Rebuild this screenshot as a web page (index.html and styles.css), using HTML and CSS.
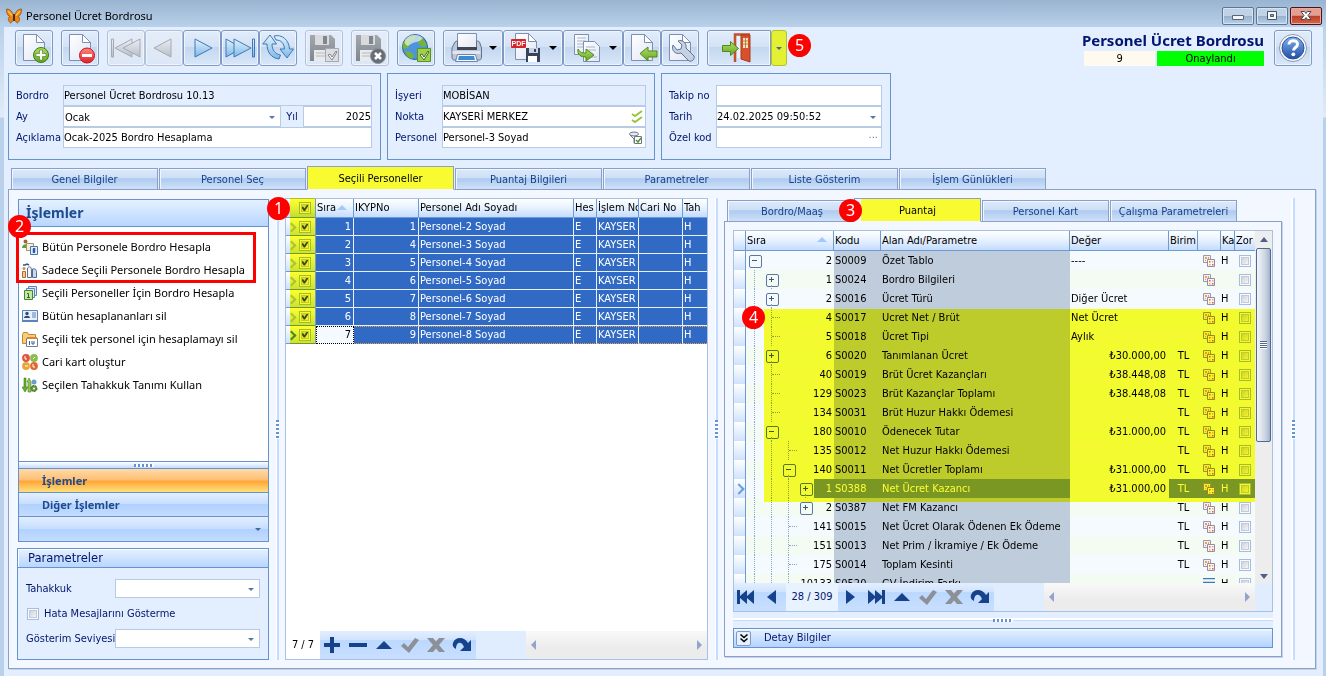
FILE: index.html
```html
<!DOCTYPE html>
<html lang="tr">
<head>
<meta charset="utf-8">
<title>Personel Ücret Bordrosu</title>
<link rel="stylesheet" href="styles.css">
</head>
<body>
<svg class="defs" aria-hidden="true">
  <defs>
    <linearGradient id="gBlue" x1="0" y1="0" x2="0" y2="1"><stop offset="0" stop-color="#e4f3fd"/><stop offset="1" stop-color="#7db8e8"/></linearGradient>
    <linearGradient id="gGray" x1="0" y1="0" x2="0" y2="1"><stop offset="0" stop-color="#eceff3"/><stop offset="1" stop-color="#b9bec6"/></linearGradient>
    <linearGradient id="gPage" x1="0" y1="0" x2="1" y2="1"><stop offset="0" stop-color="#fff"/><stop offset="1" stop-color="#dfe6f4"/></linearGradient>
    <linearGradient id="gGreen" x1="0" y1="0" x2="0" y2="1"><stop offset="0" stop-color="#b4dc62"/><stop offset="1" stop-color="#63a522"/></linearGradient>
    <linearGradient id="gRed" x1="0" y1="0" x2="0" y2="1"><stop offset="0" stop-color="#ff8a80"/><stop offset="1" stop-color="#e01c24"/></linearGradient>
    <linearGradient id="gHelp" x1="0" y1="0" x2="0" y2="1"><stop offset="0" stop-color="#7fb0ea"/><stop offset="1" stop-color="#1f4fa6"/></linearGradient>
    <linearGradient id="gDisk" x1="0" y1="0" x2="0" y2="1"><stop offset="0" stop-color="#a3a8ae"/><stop offset="1" stop-color="#80868d"/></linearGradient>
    <symbol id="page" viewBox="0 0 32 32"><path d="M5.500 2.500h13l8 8v18h-21z" fill="url(#gPage)" stroke="#7e8fb4"/><path d="M18.500 2.500v8h8z" fill="#fff" stroke="#7e8fb4"/></symbol>
    <symbol id="disk" viewBox="0 0 28 30"><path d="M1 2h21l4 4v22H1z" fill="url(#gDisk)"/><path d="M6 2h14v10H6z" fill="#d8dadd"/><path d="M14 3h4v8h-4z" fill="#80868d"/><path d="M5 17h17v11H5z" fill="#e9eaec"/><path d="M7 20h12M7 23h12" stroke="#b4b8bd"/></symbol>
    <symbol id="copies" viewBox="0 0 12 12"><path d="M.5.5h7v7h-7z" fill="#f5eef2" stroke="#9a97b4"/><path d="M2 2h2v2H2z M5 2h1v2H5z M2 5h1v1H2z" fill="#e8a04c"/><path d="M4.500 4.500h7v7h-7z" fill="#fdf4f4" stroke="#8f8cae"/><path d="M6 6h1.500v1.500H6zM9 9h1.500v1.500H9z" fill="#e0604c"/><path d="M9 6h1.500v1.500H9zM6 9h1.500v1.500H6z" fill="#f0b04c"/></symbol>
    <symbol id="n-up" viewBox="0 0 20 20"><path d="M10 6l8 8H2z" fill="#15428b"/></symbol>
    <symbol id="n-check" viewBox="0 0 20 20"><path d="M1 11l3-3 4 4 7-9 4 2-10 13z" fill="#8d9096"/></symbol>
    <symbol id="n-x" viewBox="0 0 20 20"><path d="M1 3h6l3 3.500L13 3h6l-6 7 6 7h-6l-3-3.500L7 17H1l6-7z" fill="#8d9096"/></symbol>
    <symbol id="n-redo" viewBox="0 0 20 20"><path d="M1 8C3 2 12 1 16 8l3-3v11H8l4-4C10 6 4 6 4 14 2 13 0 11 1 8z" fill="#15428b"/></symbol>
    <symbol id="n-prev" viewBox="0 0 20 20"><path d="M14 3v14L5 10z" fill="#15428b"/></symbol>
    <symbol id="n-next" viewBox="0 0 20 20"><path d="M6 3v14l9-7z" fill="#15428b"/></symbol>
    <symbol id="n-first" viewBox="0 0 20 20"><path d="M1 3h3v6l7-6v6l7-6v14l-7-6v6l-7-6v6H1z" fill="#15428b"/></symbol>
    <symbol id="n-last" viewBox="0 0 20 20"><path d="M19 3h-3v6L9 3v6L2 3v14l7-6v6l7-6v6h3z" fill="#15428b"/></symbol>
  </defs>
</svg>
<div class="window">
  <header class="titlebar">
    <svg width="16" height="16" viewBox="0 0 16 16"><path d="M8 9C7 4 4 1 .5 1 .5 4 1 7.500 4 8.500 1.500 9.500 2 13 4.500 15 6.500 14 7.500 12 8 9c.5 3 1.500 5 3.500 6 2.500-2 3-5.500.5-6.500 3-1 3.500-4.500 3.500-7.500C12 1 9 4 8 9z" fill="#ef8412" stroke="#8a480c" stroke-width=".7"/><path d="M2 3l4 4.500M14 3l-4 4.500" stroke="#ffc24d" stroke-width="1.500"/><path d="M8 6v7" stroke="#2b1a0a" stroke-width="1.500"/></svg>
    <h1>Personel Ücret Bordrosu</h1>
    <div class="caption">
      <button type="button" aria-label="Simge durumuna küçült"><svg width="12" height="10" viewBox="0 0 12 10"><path d="M.5 4.500h11v4H.5z" fill="#f4f6f8" stroke="#5a6478"/></svg></button>
      <button type="button" aria-label="Ekranı kapla"><svg width="12" height="10" viewBox="0 0 12 10"><path d="M1.500.5h9v8h-9z" fill="#f4f6f8" stroke="#4a5468"/><path d="M4.500 3.500h3v2h-3z" fill="#8fa9c8" stroke="#4a5468"/></svg></button>
      <button type="button" class="close" aria-label="Kapat"><svg width="12" height="10" viewBox="0 0 12 10"><path d="M1 .5h3.500L6 2.500 7.500.5H11L8 4.500l3 4H7.500L6 6.500l-1.500 2H1l3-4z" fill="#fff" stroke="#4a4858"/></svg></button>
    </div>
  </header>
  <main class="client">
    <div class="toolbar">
      <div class="tools">
        <div class="group"><button type="button" aria-label="Yeni"><svg width="32" height="32" viewBox="0 0 32 32"><use href="#page"/><circle cx="23" cy="23" r="7.500" fill="url(#gGreen)" stroke="#3f7a14"/><path d="M21.500 18h3v3.500H28v3h-3.500V28h-3v-3.500H18v-3h3.500z" fill="#fff" stroke="#4f8a1c" stroke-width=".7"/></svg></button></div>
        <div class="group"><button type="button" aria-label="Sil"><svg width="32" height="32" viewBox="0 0 32 32"><use href="#page"/><circle cx="23" cy="23.500" r="7.500" fill="url(#gRed)" stroke="#c8141c"/><path d="M18 22h10v3H18z" fill="#fff"/></svg></button></div>
        <div class="group">
          <button type="button" class="off" disabled aria-label="İlk"><svg width="32" height="32" viewBox="0 0 32 32"><g fill="url(#gGray)" stroke="#a2a9b5"><path d="M1.500 7h2v18h-2z"/><path d="M22 7v18L5 16z"/><path d="M30 7v18L13 16z"/></g></svg></button><button type="button" class="off" disabled aria-label="Önceki"><svg width="32" height="32" viewBox="0 0 32 32"><path d="M23 7v18L6 16z" fill="url(#gGray)" stroke="#a2a9b5"/></svg></button><button type="button" aria-label="Sonraki"><svg width="32" height="32" viewBox="0 0 32 32"><path d="M9 7v18l17-9z" fill="url(#gBlue)" stroke="#3f78b4"/></svg></button><button type="button" aria-label="Son"><svg width="32" height="32" viewBox="0 0 32 32"><g fill="url(#gBlue)" stroke="#3f78b4"><path d="M28.500 7h2v18h-2z"/><path d="M2 7v18l16-9z"/><path d="M10 7v18l17-9z"/></g></svg></button><button type="button" aria-label="Yenile"><svg width="32" height="32" viewBox="0 0 32 32"><g fill="url(#gBlue)" stroke="#3f78b4"><path d="M8 3L.8 12H5c0 8 4 14 12 15l1.500-4C13 22 10 18 10 12h4.500z"/><path d="M12 4l2 4c5 0 8 3 8.500 9H18l7 9 6.500-9h-4C27 8 20 2 12 4z"/></g></svg></button>
        </div>
        <div class="group"><button type="button" class="off" disabled aria-label="Kaydet"><svg width="32" height="32" viewBox="0 0 32 32"><use href="#disk" width="28" height="30" x="1" y="1"/><path d="M17.500 16.500h13v13h-13z" fill="#dcdee1" stroke="#a4a9b0"/><path d="M20 23l2-1 2 3 4-6 1 1-5 8z" fill="#fff" stroke="#7c828a"/></svg></button></div>
        <div class="group"><button type="button" class="off" disabled aria-label="Vazgeç"><svg width="32" height="32" viewBox="0 0 32 32"><use href="#disk" width="28" height="30" x="1" y="1"/><circle cx="24" cy="24" r="7.500" fill="#686e76" stroke="#8d9299"/><path d="M21 21l6 6M27 21l-6 6" stroke="#fff" stroke-width="2.500"/></svg></button></div>
        <div class="group"><button type="button" aria-label="Onay"><svg width="32" height="32" viewBox="0 0 32 32"><circle cx="15" cy="15" r="12.500" fill="#4d94dc" stroke="#2c5f9c"/><path d="M4 10c3-5 8-7 12-6l-2 4-4 2-2 6-5 1c-1-3 0-5 1-7zM19 5c4 1 7 5 8 9l-5 1-4-4zM5 19l6 1 3 4-2 3c-4-1-6-4-7-8z" fill="#74b33a"/><path d="M5 8c4-6 12-7 18-2-4 5-9 3-15 8-3-1-4-3-3-6z" fill="#fff" opacity=".6"/><path d="M17.500 16.500h13v13h-13z" fill="#9fd04c" stroke="#5a9420"/><path d="M20 23l2-1 2 3 4-6 1 1-5 8z" fill="#fff" stroke="#3d6f16"/></svg></button></div>
        <div class="group">
          <button type="button" class="wide" aria-label="Yazdır"><svg width="34" height="32" viewBox="0 0 34 32"><path d="M7.500 1.500h19v16h-19z" fill="url(#gPage)" stroke="#7e8fb4"/><path d="M5 10c1-1 2-1 2.500-1v7h19V9c1 0 2 0 3 1l2 6v9c0 2-1 3-2 3H4c-1 0-2-1-2-3v-9z" fill="#bcc7da" stroke="#64718c"/><path d="M7 15h20v3H7z" fill="#3f4658"/><path d="M2.500 19h28v3h-28z" fill="#dfe6f1"/><path d="M7.500 22.500h18l2 7h-22z" fill="#f5f8fc" stroke="#6f82a8"/><path d="M9 24h15l1 4H8z" fill="#3f8bd0"/></svg><i class="caret"></i></button><button type="button" class="wide" aria-label="PDF kaydet"><svg width="34" height="32" viewBox="0 0 34 32"><use href="#page" width="32" height="32" x="0" y="-1"/><rect x="1" y="7" width="15" height="9" rx="1" fill="#d8232a"/><text x="8.500" y="14" class="pdf" text-anchor="middle">PDF</text><path d="M16 16h14v14H16z" fill="#39445c"/><path d="M19 16h9v5h-9z" fill="#c9d3e6"/><path d="M18 24h9v6h-9z" fill="#fff"/><path d="M24 17h2v3h-2z" fill="#39445c"/></svg><i class="caret"></i></button><button type="button" class="wide" aria-label="Kopyala"><svg width="34" height="32" viewBox="0 0 34 32"><path d="M4.500 2.500h14v20h-14z" fill="url(#gPage)" stroke="#7e8fb4"/><path d="M7 6h9M7 9h9M7 12h6M7 15h6" stroke="#a7b4d0"/><path d="M13.500 9.500h11l5 5v15h-16z" fill="url(#gPage)" stroke="#7e8fb4"/><path d="M16 15h9M16 18h10M20 25h7" stroke="#a7b4d0"/><path d="M8 17c2 4 5 4 8 4v-4l8 6-8 6v-4c-5 0-9-2-8-8z" fill="url(#gGreen)" stroke="#4c8a1a"/></svg><i class="caret"></i></button><button type="button" aria-label="İçeri al"><svg width="32" height="32" viewBox="0 0 32 32"><use href="#page"/><path d="M14 21.500l8-6.500v4h9v6h-9v4z" fill="url(#gGreen)" stroke="#4c8a1a"/></svg></button><button type="button" aria-label="Ayarlar"><svg width="32" height="32" viewBox="0 0 32 32"><use href="#page"/><path d="M9 13c-2 5 2 10 8 8l8 8c3 1 6-2 5-5l-8-8c1-5-4-9-8-7l4 4-1 4-4 1z" fill="#c6d2e4" stroke="#5f7396"/></svg></button>
        </div>
        <div class="group exit">
          <button type="button" class="door" aria-label="Çıkış"><svg width="36" height="32" viewBox="0 0 36 32"><path d="M14 30V2.500h15" fill="none" stroke="#c4512c" stroke-width="2.500"/><path d="M16 4h5v22h-5z" fill="#e8f0fb"/><path d="M20 3h9v27l-9-3z" fill="#d9502c" stroke="#a63a1c"/><path d="M22 6h5v10h-5z" fill="#fbe4b0"/><path d="M24.500 6v10M22 9h5M22 12h5" stroke="#a86a3c" stroke-width=".8"/><path d="M1.500 13.500h8v-4l8 7-8 7v-4h-8z" fill="url(#gGreen)" stroke="#4c8a1a"/></svg></button><button type="button" class="more" aria-label="Çıkış seçenekleri"><i class="caret small"></i></button>
        </div>
        <span class="badge">5</span>
      </div>
      <div class="status">
        <h2>Personel Ücret Bordrosu</h2>
        <p><span class="count">9</span><span class="state">Onaylandı</span></p>
      </div>
      <button type="button" class="help" aria-label="Yardım"><svg width="32" height="32" viewBox="0 0 32 32"><circle cx="16" cy="16" r="13.500" fill="#fff" stroke="#8794b4"/><circle cx="16" cy="16" r="11" fill="url(#gHelp)" stroke="#28549f"/><path d="M12 12.500c0-5 8.500-5 8.500-.3 0 3.300-4 3.300-4 6.300" fill="none" stroke="#fff" stroke-width="3"/><circle cx="16.300" cy="22.300" r="1.900" fill="#fff"/></svg></button>
    </div>

    <div class="forms">
      <fieldset class="form f1">
        <label for="bordro">Bordro</label><input id="bordro" class="ro" readonly value="Personel Ücret Bordrosu 10.13">
        <label for="ay">Ay</label>
        <div class="split"><span class="pick"><select id="ay"><option>Ocak</option></select></span><label for="yil">Yıl</label><input id="yil" class="num" value="2025"></div>
        <label for="acik">Açıklama</label><input id="acik" value="Ocak-2025 Bordro Hesaplama">
      </fieldset>
      <fieldset class="form f2">
        <label for="isyeri">İşyeri</label><input id="isyeri" class="ro" readonly value="MOBİSAN">
        <label for="nokta">Nokta</label><span class="with-icon"><input id="nokta" value="KAYSERİ MERKEZ"><svg width="12" height="14" viewBox="0 0 12 14"><path d="M1 4l3 2 7-5M1 10l3 2 7-5" fill="none" stroke="#9ac43c" stroke-width="2"/></svg></span>
        <label for="pers">Personel</label><span class="with-icon"><input id="pers" value="Personel-3 Soyad"><svg width="14" height="14" viewBox="0 0 14 14"><ellipse cx="5" cy="3" rx="4.500" ry="2" fill="#e6eaf0" stroke="#6c7686"/><path d="M1 4l4 4v4" fill="none" stroke="#6c7686"/><path d="M5.500 5.500h7v7h-7z" fill="#fff" stroke="#6c7686"/><path d="M7 9l2 2 3-4" fill="none" stroke="#4f9a1c" stroke-width="1.500"/></svg></span>
      </fieldset>
      <fieldset class="form f3">
        <label for="takip">Takip no</label><input id="takip">
        <label for="tarih">Tarih</label><span class="pick"><input id="tarih" value="24.02.2025 09:50:52"></span>
        <label for="ozel">Özel kod</label><span class="dots"><input id="ozel"></span>
      </fieldset>
    </div>

    <nav class="tabs outer">
      <button type="button">Genel Bilgiler</button><button type="button">Personel Seç</button><button type="button" class="on">Seçili Personeller</button><button type="button">Puantaj Bilgileri</button><button type="button">Parametreler</button><button type="button">Liste Gösterim</button><button type="button">İşlem Günlükleri</button>
    </nav>

    <section class="sheet">
      <aside class="side">
        <div class="navbar">
          <h3>İşlemler</h3>
          <ul>
            <li><button type="button"><svg width="16" height="16" viewBox="0 0 16 16"><circle cx="3.500" cy="2.500" r="2" fill="#a0642c"/><path d="M0 9c0-5 7-5 7 0z" fill="#5ea03c"/><path d="M4.500 4.500h7v7h-7z" fill="#f6efd8" stroke="#9a9478"/><path d="M8.500 7.500h7v8h-7z" fill="#e4ecf8" stroke="#4c74a8"/><path d="M11 9.500h2v1h-2v1h2v1h-2v1h2" fill="none" stroke="#2c5c9c"/></svg>Bütün Personele Bordro Hesapla</button></li>
            <li><button type="button"><svg width="16" height="16" viewBox="0 0 16 16"><path d="M1 3h2l2-1 2 1" stroke="#2c5c9c" fill="none" stroke-width="1.500"/><circle cx="2" cy="6.500" r="1.500" fill="#e08a3c"/><path d="M.5 9.500h3v6h-3z" fill="#f0c890" stroke="#b06c2c"/><path d="M5.500 6c3-3 4 0 4 3v6.500h-4z" fill="#f4f6fa" stroke="#5c6c8c"/><path d="M10.500 7c4-1 4 2 4 4v4.500h-4z" fill="#cfd8e8" stroke="#4c6c9c"/></svg>Sadece Seçili Personele Bordro Hesapla</button></li>
            <li><button type="button"><svg width="16" height="16" viewBox="0 0 16 16"><path d="M6.500 1.500h8v9h-8z" fill="#dfe9f8" stroke="#5c84b8"/><path d="M4.500 3.500h8v9h-8z" fill="#dfe9f8" stroke="#5c84b8"/><path d="M2.500 5.500h8v9h-8z" fill="#c8e6a8" stroke="#3c8a2c"/><path d="M5 8.500h1.500v4M5 12.500h3" fill="none" stroke="#2c6c1c"/></svg>Seçili Personeller İçin Bordro Hesapla</button></li>
            <li><button type="button"><svg width="16" height="16" viewBox="0 0 16 16"><path d="M.5 2.500h15v11H.5z" fill="#e8f0fa" stroke="#5c84b8"/><path d="M0 12h16v2H0z" fill="#5c84b8"/><circle cx="5" cy="5.500" r="1.700" fill="#2c4c7c"/><path d="M2 10c0-3 6-3 6 0z" fill="#2c4c7c"/><path d="M10 5h4M10 7h4M10 9h4" stroke="#5c84b8"/></svg>Bütün hesaplananları sil</button></li>
            <li><button type="button"><svg width="16" height="16" viewBox="0 0 16 16"><path d="M.5 3.500l1-2h4l1 2h7v9H.5z" fill="#f8cc7c" stroke="#c08a34"/><path d="M4.500 7.500h11v8h-11z" fill="#fff" stroke="#6c7c9c"/><path d="M5 6h10v2H5z" fill="#d8862c"/><path d="M7.500 14v-4M10 10v3h2v-3" fill="none" stroke="#3c5c8c"/></svg>Seçili tek personel için hesaplamayı sil</button></li>
            <li><button type="button"><svg width="16" height="16" viewBox="0 0 16 16"><circle cx="4" cy="4" r="3.900" fill="#e0543c"/><circle cx="12" cy="4" r="3.900" fill="#8cbc4c"/><circle cx="4" cy="12" r="3.900" fill="#e8a43c"/><circle cx="12" cy="12" r="3.900" fill="#e06a2c"/><path d="M3 2v3h2M11 5l2-2M3 12h3M11 10v3h2" fill="none" stroke="#fff"/></svg>Cari kart oluştur</button></li>
            <li><button type="button"><svg width="16" height="16" viewBox="0 0 16 16"><path d="M2 1h2v9h2l-3 5-3-5h2z" fill="#6cac2c" stroke="#3c7c1c" stroke-width=".6"/><path d="M6 15V5H5l2-4 2 4v10z" fill="#9ac45c" stroke="#3c7c1c" stroke-width=".6"/><circle cx="12" cy="5" r="2.500" fill="#6c9ccc"/><circle cx="12" cy="11.500" r="3" fill="#5c9c34" stroke="#345c1c" stroke-dasharray="2 1"/><circle cx="12" cy="11.500" r="1" fill="#fff"/></svg>Seçilen Tahakkuk Tanımı Kullan</button></li>
          </ul>
          <div class="grip"><i></i></div>
          <button type="button" class="bar hot">İşlemler</button>
          <button type="button" class="bar">Diğer İşlemler</button>
          <button type="button" class="bar tail" aria-label="Düğmeleri yapılandır"><i class="caret small"></i></button>
          <div class="mark-box"></div>
          <span class="badge b2">2</span>
        </div>
        <div class="params">
          <h3>Parametreler</h3>
          <div class="params-body">
            <label for="tah">Tahakkuk</label><span class="pick"><select id="tah"><option></option></select></span>
            <label class="check"><input type="checkbox">Hata Mesajlarını Gösterme</label>
            <label for="sev">Gösterim Seviyesi</label><span class="pick"><select id="sev"><option></option></select></span>
          </div>
        </div>
      </aside>
      <div class="splitter"><i></i></div>

      <div class="grid people">
        <div class="grid-body">
          <table>
            <colgroup><col class="w30"><col class="w38"><col class="w65"><col><col class="w23"><col class="w42"><col class="w44"><col class="w24"></colgroup>
            <thead><tr><th class="sel"><input type="checkbox" checked aria-label="Tümünü seç"></th><th class="sorted">Sıra</th><th>IKYPNo</th><th>Personel Adı Soyadı</th><th>Hes</th><th>İşlem No</th><th>Cari No</th><th>Tah</th></tr></thead>
            <tbody>
              <tr><td class="sel"><input type="checkbox" checked aria-label="Seç 1"></td><td>1</td><td>1</td><td>Personel-2 Soyad</td><td>E</td><td>KAYSER</td><td></td><td>H</td></tr>
              <tr><td class="sel"><input type="checkbox" checked aria-label="Seç 2"></td><td>2</td><td>4</td><td>Personel-3 Soyad</td><td>E</td><td>KAYSER</td><td></td><td>H</td></tr>
              <tr><td class="sel"><input type="checkbox" checked aria-label="Seç 3"></td><td>3</td><td>5</td><td>Personel-4 Soyad</td><td>E</td><td>KAYSER</td><td></td><td>H</td></tr>
              <tr><td class="sel"><input type="checkbox" checked aria-label="Seç 4"></td><td>4</td><td>6</td><td>Personel-5 Soyad</td><td>E</td><td>KAYSER</td><td></td><td>H</td></tr>
              <tr><td class="sel"><input type="checkbox" checked aria-label="Seç 5"></td><td>5</td><td>7</td><td>Personel-6 Soyad</td><td>E</td><td>KAYSER</td><td></td><td>H</td></tr>
              <tr><td class="sel"><input type="checkbox" checked aria-label="Seç 6"></td><td>6</td><td>8</td><td>Personel-7 Soyad</td><td>E</td><td>KAYSER</td><td></td><td>H</td></tr>
              <tr class="current"><td class="sel"><input type="checkbox" checked aria-label="Seç 7"></td><td>7</td><td>9</td><td>Personel-8 Soyad</td><td>E</td><td>KAYSER</td><td></td><td>H</td></tr>
            </tbody>
          </table>
        </div>
        <div class="mark-check"></div>
        <span class="badge b1">1</span>
        <div class="navigator">
          <span class="pos">7 / 7</span>
          <div class="nav-buttons">
            <button type="button" aria-label="Ekle"><svg width="20" height="20" viewBox="0 0 20 20"><path d="M8 2h4v6h6v4h-6v6H8v-6H2V8h6z" fill="#15428b"/></svg></button><button type="button" aria-label="Çıkar"><svg width="20" height="20" viewBox="0 0 20 20"><path d="M1 8h18v4H1z" fill="#15428b"/></svg></button><button type="button" aria-label="Düzenle"><svg width="20" height="20"><use href="#n-up"/></svg></button><button type="button" aria-label="Onayla"><svg width="20" height="20"><use href="#n-check"/></svg></button><button type="button" aria-label="İptal"><svg width="20" height="20"><use href="#n-x"/></svg></button><button type="button" aria-label="Yenile"><svg width="20" height="20"><use href="#n-redo"/></svg></button>
          </div>
          <div class="hscroll"><i class="left"></i><i class="right"></i></div>
        </div>
      </div>
      <div class="splitter"><i></i></div>

      <div class="detail">
        <nav class="tabs inner">
          <button type="button" class="first">Bordro/Maaş</button><button type="button" class="on">Puantaj</button><button type="button">Personel Kart</button><button type="button">Çalışma Parametreleri</button>
          <span class="badge b3">3</span>
        </nav>
        <div class="pane">
          <div class="grid tree">
            <div class="grid-row">
              <div class="grid-body">
                <table>
                  <colgroup><col class="w12"><col class="w88"><col class="w47"><col class="w189"><col><col class="w29"><col class="w23"><col class="w14"><col class="w20"></colgroup>
                  <thead><tr><th></th><th class="sorted">Sıra</th><th>Kodu</th><th>Alan Adı/Parametre</th><th>Değer</th><th>Birim</th><th></th><th>Ka</th><th>Zor</th></tr></thead>
                  <tbody>
                    <tr><td></td><td><div class="node"><i class="box minus"></i><span>2</span></div></td><td>S0009</td><td>Özet Tablo</td><td class="txt">----</td><td></td><td><svg><use href="#copies"/></svg></td><td>H</td><td><input type="checkbox" aria-label="S0009"></td></tr>
                    <tr><td></td><td><div class="node"><i class="v"></i><i class="box plus v"></i><span>1</span></div></td><td>S0024</td><td>Bordro Bilgileri</td><td></td><td></td><td><svg><use href="#copies"/></svg></td><td></td><td><input type="checkbox" aria-label="S0024"></td></tr>
                    <tr><td></td><td><div class="node"><i class="v"></i><i class="box plus v"></i><span>2</span></div></td><td>S0016</td><td>Ücret Türü</td><td class="txt">Diğer Ücret</td><td></td><td><svg><use href="#copies"/></svg></td><td>H</td><td><input type="checkbox" aria-label="S0016"></td></tr>
                    <tr><td></td><td><div class="node"><i class="v"></i><i class="v h"></i><span>4</span></div></td><td>S0017</td><td>Ucret Net / Brüt</td><td class="txt">Net Ücret</td><td></td><td><svg><use href="#copies"/></svg></td><td>H</td><td><input type="checkbox" aria-label="S0017"></td></tr>
                    <tr><td></td><td><div class="node"><i class="v"></i><i class="v h"></i><span>5</span></div></td><td>S0018</td><td>Ücret Tipi</td><td class="txt">Aylık</td><td></td><td><svg><use href="#copies"/></svg></td><td>H</td><td><input type="checkbox" aria-label="S0018"></td></tr>
                    <tr><td></td><td><div class="node"><i class="v"></i><i class="box plus v"></i><span>6</span></div></td><td>S0020</td><td>Tanımlanan Ücret</td><td>₺30.000,00</td><td>TL</td><td><svg><use href="#copies"/></svg></td><td>H</td><td><input type="checkbox" aria-label="S0020"></td></tr>
                    <tr><td></td><td><div class="node"><i class="v"></i><i class="v h"></i><span>40</span></div></td><td>S0019</td><td>Brüt Ücret Kazançları</td><td>₺38.448,08</td><td>TL</td><td><svg><use href="#copies"/></svg></td><td>H</td><td><input type="checkbox" aria-label="S0019"></td></tr>
                    <tr><td></td><td><div class="node"><i class="v"></i><i class="v h"></i><span>129</span></div></td><td>S0023</td><td>Brüt Kazançlar Toplamı</td><td>₺38.448,08</td><td>TL</td><td><svg><use href="#copies"/></svg></td><td>H</td><td><input type="checkbox" aria-label="S0023"></td></tr>
                    <tr><td></td><td><div class="node"><i class="v"></i><i class="v h"></i><span>134</span></div></td><td>S0031</td><td>Brüt Huzur Hakkı Ödemesi</td><td></td><td>TL</td><td><svg><use href="#copies"/></svg></td><td>H</td><td><input type="checkbox" aria-label="S0031"></td></tr>
                    <tr><td></td><td><div class="node"><i class="v"></i><i class="box minus v"></i><span>180</span></div></td><td>S0010</td><td>Ödenecek Tutar</td><td>₺31.000,00</td><td>TL</td><td><svg><use href="#copies"/></svg></td><td>H</td><td><input type="checkbox" aria-label="S0010"></td></tr>
                    <tr><td></td><td><div class="node"><i class="v"></i><i class="v"></i><i class="v h"></i><span>135</span></div></td><td>S0012</td><td>Net Huzur Hakkı Ödemesi</td><td></td><td>TL</td><td><svg><use href="#copies"/></svg></td><td>H</td><td><input type="checkbox" aria-label="S0012"></td></tr>
                    <tr><td></td><td><div class="node"><i class="v"></i><i class="v"></i><i class="box minus v"></i><span>140</span></div></td><td>S0011</td><td>Net Ücretler Toplamı</td><td>₺31.000,00</td><td>TL</td><td><svg><use href="#copies"/></svg></td><td>H</td><td><input type="checkbox" aria-label="S0011"></td></tr>
                    <tr class="current"><td></td><td><div class="node"><i class="v"></i><i class="v"></i><i class="v"></i><i class="box plus v"></i><span>1</span></div></td><td>S0388</td><td>Net Ücret Kazancı</td><td>₺31.000,00</td><td>TL</td><td><svg><use href="#copies"/></svg></td><td>H</td><td><input type="checkbox" aria-label="S0388"></td></tr>
                    <tr><td></td><td><div class="node"><i class="v"></i><i class="v"></i><i class="v"></i><i class="box plus"></i><span>2</span></div></td><td>S0387</td><td>Net FM Kazancı</td><td></td><td>TL</td><td><svg><use href="#copies"/></svg></td><td>H</td><td><input type="checkbox" aria-label="S0387"></td></tr>
                    <tr><td></td><td><div class="node"><i class="v"></i><i class="v"></i><i class="v h"></i><span>141</span></div></td><td>S0015</td><td>Net Ücret Olarak Ödenen Ek Ödeme</td><td></td><td>TL</td><td><svg><use href="#copies"/></svg></td><td>H</td><td><input type="checkbox" aria-label="S0015"></td></tr>
                    <tr><td></td><td><div class="node"><i class="v"></i><i class="v"></i><i class="v h"></i><span>151</span></div></td><td>S0013</td><td>Net Prim / İkramiye / Ek Ödeme</td><td></td><td>TL</td><td><svg><use href="#copies"/></svg></td><td>H</td><td><input type="checkbox" aria-label="S0013"></td></tr>
                    <tr><td></td><td><div class="node"><i class="v"></i><i class="v"></i><i class="v h"></i><span>175</span></div></td><td>S0014</td><td>Toplam Kesinti</td><td></td><td>TL</td><td><svg><use href="#copies"/></svg></td><td>H</td><td><input type="checkbox" aria-label="S0014"></td></tr>
                    <tr><td></td><td><div class="node"><i class="v"></i><i class="v"></i><i class="v h"></i><span>10133</span></div></td><td>S0520</td><td>GV İndirim Farkı</td><td></td><td></td><td><svg viewBox="0 0 12 12"><path d="M0 .500h12M0 4.500h12M0 8.500h12" stroke="#3c78c0" stroke-width="1.500"/></svg></td><td>H</td><td><input type="checkbox" aria-label="S0520"></td></tr>
                  </tbody>
                </table>
                <div class="mark-rows"></div>
              </div>
              <div class="vscroll"><i class="up"></i><div class="thumb"><i></i></div><span class="track"></span><i class="down"></i></div>
            </div>
            <div class="navigator">
              <div class="nav-buttons">
                <button type="button" aria-label="İlk"><svg width="20" height="20"><use href="#n-first"/></svg></button><button type="button" aria-label="Önceki"><svg width="20" height="20"><use href="#n-prev"/></svg></button><span class="pos">28 / 309</span><button type="button" aria-label="Sonraki"><svg width="20" height="20"><use href="#n-next"/></svg></button><button type="button" aria-label="Son"><svg width="20" height="20"><use href="#n-last"/></svg></button><button type="button" aria-label="Düzenle"><svg width="20" height="20"><use href="#n-up"/></svg></button><button type="button" aria-label="Onayla"><svg width="20" height="20"><use href="#n-check"/></svg></button><button type="button" aria-label="İptal"><svg width="20" height="20"><use href="#n-x"/></svg></button><button type="button" aria-label="Yenile"><svg width="20" height="20"><use href="#n-redo"/></svg></button>
              </div>
              <div class="hscroll"><i class="left"></i><i class="right"></i></div>
            </div>
            <span class="badge b4">4</span>
          </div>
          <div class="hsplitter"><i></i></div>
          <div class="fold"><button type="button" aria-label="Detay Bilgiler"><svg width="8" height="9" viewBox="0 0 8 9"><path d="M.5 .5L4 3.500 7.500 .5M.5 4.500L4 7.500l3.500-3" fill="none" stroke="#000" stroke-width="1.500"/></svg></button><span>Detay Bilgiler</span></div>
        </div>
      </div>
      <div class="splitter last"><i></i></div>
    </section>
  </main>
</div>
</body>
</html>
```
FILE: styles.css
```css
* { box-sizing: border-box; }
body {
  margin: 0;
  font: 11px/16px "DejaVu Sans Condensed", "Noto Sans", Tahoma, sans-serif;
  color: #000;
  background: linear-gradient(#b9d1ea 27px, #e0ecf7 117px, #b9d1ea 118px);
}
button, input, select { font: inherit; color: inherit; margin: 0; padding: 0; border: 0; background: none; border-radius: 0; min-width: 0; }
h1, h2, h3, p, ul, fieldset { margin: 0; padding: 0; border: 0; list-style: none; font-weight: normal; min-width: 0; }
button { white-space: nowrap; }
.defs { position: absolute; width: 0; height: 0; }

.window { height: 100vh; min-height: 640px; display: flex; flex-direction: column; }
.titlebar {
  display: flex; align-items: center; flex: none; height: 27px; padding: 4px 4px 0 6px; gap: 4px;
  background: linear-gradient(#99b4d1, #b9d1ea);
}
.titlebar h1 { flex: 1; font: 11px/16px "Noto Sans", sans-serif; }
.caption { display: flex; gap: 2px; }
.caption button {
  width: 32px; height: 18px; display: flex; align-items: center; justify-content: center;
  border: 1px solid #5f7590; border-radius: 2px; box-shadow: inset 0 0 0 1px #d5e3f2;
  background: linear-gradient(#bfd2e6 48%, #96b1cf 50%, #b7d0e8);
}
.caption .close { border-color: #4b1418; box-shadow: inset 0 0 0 1px #e9a99c; background: linear-gradient(#e3a092 46%, #bb3e26 50%, #d2664b); }

.client {
  flex: 1; min-height: 0; display: flex; flex-direction: column; margin: 0 3px 0 4px; padding: 3px 7px 7px 4px;
  background: #e3eeff; color: #00156e;
}

/* toolbar */
.toolbar { display: flex; flex: none; padding: 0 4px 0 7px; height: 36px; }
.tools { display: flex; flex: 1; gap: 8px; align-items: center; }
.group { display: flex; }
.group button, .help {
  width: 38px; height: 36px; display: flex; align-items: center; justify-content: center;
  border: 1px solid #7e99c4; border-radius: 3px; box-shadow: inset 0 0 0 1px #eef5ff;
  background: linear-gradient(#e2edfb 0, #d3e2f5 46%, #c3d7ef 48%, #d9e7f9);
}
.group button.off { border-color: #b3c1d6; background: linear-gradient(#e4ecf8, #dce7f5); }
.group button.wide { width: 60px; gap: 5px; }
.group button.door { width: 64px; border-radius: 3px 0 0 3px; }
.group button.more { width: 16px; background: #e3f034; border-color: #b4c02e; box-shadow: none; }
.pdf { font: bold 7px "Liberation Sans", sans-serif; fill: #fff; }
.caret { border: 4px solid transparent; border-top-color: #000; border-bottom: 0; }
.caret.small { border-width: 3px; border-bottom: 0; border-top-color: #3f6b9c; }
.badge {
  width: 23px; height: 23px; border-radius: 50%; background: #fe0000; color: #fff;
  font: 16px/23px "Noto Sans", sans-serif; text-align: center; z-index: 3;
}
.tools .badge { margin-left: -7px; margin-bottom: 6px; }
.status { width: 184px; margin-right: 10px; }
.status h2 { font: bold 15px/21px "Noto Sans", sans-serif; text-align: right; white-space: nowrap; }
.status p { display: flex; gap: 2px; padding-left: 4px; color: #000; line-height: 15px; text-align: center; }
.count { flex: 2; background: #fffaf0; }
.state { flex: 3; background: #00ff00; }

/* header forms */
.forms { display: flex; gap: 6px; margin-top: 7px; flex: none; }
.form { display: grid; grid-auto-rows: 21px; align-items: stretch; border: 1px solid #6593cf; padding: 11px 8px 11px 7px; line-height: 21px; }
.f1 { width: 373px; grid-template-columns: 47px 1fr; }
.f2 { width: 268px; grid-template-columns: 47px 1fr; }
.f3 { width: 230px; grid-template-columns: 47px 1fr; }
.form input, .form select { width: 100%; height: 21px; padding: 0; border: 1px solid #b8cbe6; background: #fff; color: #000; }
.form .ro { background: #e3eeff; }
.form .num { text-align: right; width: 69px; }
.split { display: flex; }
.split .pick { flex: 1; }
.split label { width: 22px; text-align: center; }
.pick, .with-icon, .dots { position: relative; display: block; }
.pick select { appearance: none; padding-left: 1px; }
.pick::after {
  content: ""; position: absolute; right: 6px; top: 50%; margin-top: -1px; border: 3px solid transparent;
  border-top-color: #5078a8; border-bottom: 0; pointer-events: none;
}
.with-icon svg { position: absolute; right: 3px; top: 4px; }
.dots::after { content: "..."; position: absolute; right: 4px; top: -3px; color: #5f7fa8; }

/* tabs */
.tabs { display: flex; align-items: flex-end; flex: none; gap: 1px; position: relative; z-index: 1; }
.tabs button {
  height: 22px; padding-top: 2px; border: 1px solid #8ba0c7; box-shadow: inset 1px 1px 0 #f0f6ff; color: #15428b;
  background: linear-gradient(#dce9fa 0, #cddff6 46%, #aecaf0 48%, #cfe1f8);
}
.tabs .on { height: 24px; border-bottom-color: #f3f7ff; box-shadow: none; background: #f7fb30; color: #000; }
.outer { margin-top: 6px; padding-left: 3px; }
.outer button { width: 147px; }
.sheet, .pane { border: 1px solid #8ba0c7; background: #f3f7ff; margin-top: -1px; box-shadow: 1px 1px 0 #c4d3ea; }
.sheet { flex: 1; min-height: 0; display: flex; padding: 8px 0 8px 8px; }

/* splitters */
.splitter { width: 16px; flex: none; display: flex; align-items: center; justify-content: center; background: linear-gradient(90deg, transparent 7px, #fff 7px, #fff 8px, #c4dcff 8px, #c4dcff 10px, transparent 10px); }
.splitter i { width: 3px; height: 19px; background: repeating-linear-gradient(#6593cf 0, #6593cf 2px, #fff 2px, #fff 4px); }
.splitter.last { width: 33px; justify-content: flex-start; padding-left: 10px; background: linear-gradient(90deg, transparent 9px, #fff 9px, #fff 11px, #c4dcff 11px, #c4dcff 13px, transparent 13px); }

/* left column */
.side { width: 252px; flex: none; display: flex; flex-direction: column; gap: 6px; }
.navbar { position: relative; flex: 1; min-height: 0; display: flex; flex-direction: column; margin: 1px 0 0 1px; border: 1px solid #6593cf; background: #fff; }
.navbar h3 {
  height: 27px; flex: none; padding-left: 7px; border-bottom: 1px solid #6593cf; background: linear-gradient(#e6f1ff, #b8d6ff);
  font: bold 14px/26px "Noto Sans", sans-serif; color: #1f4b8f;
}
.navbar ul { flex: 1; padding-top: 8px; overflow: hidden; }
.navbar li button { display: flex; align-items: center; gap: 4px; height: 23px; padding-left: 3px; color: #000; font: 11px/16px "Noto Sans", sans-serif; }
.grip { height: 8px; flex: none; border: solid #6593cf; border-width: 1px 0; background: linear-gradient(#fff, #c4dcff); display: flex; align-items: center; justify-content: center; }
.grip i, .hsplitter i { width: 20px; height: 3px; background: repeating-linear-gradient(90deg, #6593cf 0, #6593cf 2px, #fff 2px, #fff 4px); }
.bar {
  height: 24px; flex: none; text-align: left; padding-left: 23px; font: bold 11px/22px "Noto Sans", sans-serif; color: #1f4b8f;
  border-bottom: 1px solid #6593cf; background: linear-gradient(#e3efff, #c6deff 48%, #b0d1ff 50%, #c4dcff);
}
.bar.hot { background: linear-gradient(#ffdaa8, #ffbf72 48%, #ffa436 52%, #ffe07c); }
.bar.tail { border: 0; display: flex; align-items: center; justify-content: flex-end; padding-right: 7px; }
.mark-box { position: absolute; left: -3px; top: 32px; width: 240px; height: 51px; border: 3px solid #fe0000; }
.b2 { position: absolute; left: -11px; top: 15px; }
.params { flex: none; border: 1px solid #6593cf; }
.params h3 { height: 19px; padding-left: 10px; line-height: 18px; border-bottom: 1px solid #6593cf; background: linear-gradient(#e6f1ff, #b8d6ff); box-shadow: inset 1px 1px 0 #fff; }
.params-body { display: grid; grid-template-columns: 89px 1fr; row-gap: 6px; align-items: center; background: #e3eeff; padding: 11px 8px; line-height: 19px; }
.params label { white-space: nowrap; }
.params select { display: block; width: 100%; height: 19px; background: #fff; border: 1px solid #b8cbe6; }
.check { grid-column: 1 / 3; display: flex; align-items: center; gap: 5px; padding-left: 1px; }

input[type="checkbox"] {
  appearance: none; display: block; flex: none; width: 12px; height: 12px; border: 1px solid #a7bde0; box-shadow: inset 0 0 0 1px #f7faff, inset 0 0 0 2px #c3cbd8;
  background: linear-gradient(135deg, #c3c8d0, #fff);
}
input[type="checkbox"]:checked::before { content: ""; display: block; width: 6px; height: 6px; margin: 2px; background: #3b4a6c; clip-path: polygon(0 30%, 20% 30%, 40% 60%, 80% 0, 100% 0, 100% 20%, 50% 100%, 30% 100%, 0 60%); }

/* grids */
.grid { position: relative; display: flex; flex-direction: column; border: 1px solid #a9c1e0; }
.grid-body { flex: 1; min-height: 0; min-width: 0; overflow: hidden; position: relative; }
table { width: 100%; table-layout: fixed; border-collapse: separate; border-spacing: 0; }
th, td { padding: 0 1px; white-space: nowrap; overflow: hidden; text-align: left; font-weight: normal; color: #000; }
th { height: 19px; border-right: 1px solid #6f9bd3; border-bottom: 1px solid #6f9bd3; background: linear-gradient(#fff, #e6f1ff 50%, #c4dcff); line-height: 18px; }
th:last-child { border-right: 0; }
.sorted { position: relative; }
.sorted::after { content: ""; position: absolute; right: 6px; top: 6px; border: 5px solid transparent; border-bottom-color: #a3c8ff; border-top: 0; }
.w12 { width: 12px; } .w14 { width: 14px; } .w20 { width: 20px; } .w23 { width: 23px; } .w24 { width: 24px; } .w29 { width: 29px; } .w30 { width: 30px; }
.w38 { width: 38px; } .w42 { width: 42px; } .w44 { width: 44px; } .w47 { width: 47px; } .w65 { width: 65px; } .w88 { width: 88px; } .w189 { width: 189px; }

.people { width: 423px; flex: none; background: #fff; }
.people td { height: 18px; line-height: 17px; background: #316ac5; color: #fff; border-right: 1px solid #e8f0fc; border-bottom: 1px solid #e8f0fc; }
.people td:last-child { border-right: 0; }
.people td:nth-child(2), .people td:nth-child(3) { text-align: right; padding-right: 2px; }
.people td.sel { background: linear-gradient(#fff, #cfe2fd); border-right-color: #6f9bd3; border-bottom-color: #6f9bd3; }
.sel { position: relative; }
.sel input { margin-left: 12px; }
td.sel::before { content: ""; position: absolute; left: 2px; top: 6px; width: 5px; height: 5px; border: solid #a9c6f0; border-width: 2px 2px 0 0; transform: rotate(45deg); }
.current td.sel::before { border-color: #4f86c8; }
.people .current td:not(.sel) { border-bottom: 1px dotted #f0a040; border-top: 1px dotted #f0a040; line-height: 16px; }
.people .current td:nth-child(2) { background: #f5faff; color: #000; border: 1px dotted #000 !important; }
.mark-check { position: absolute; left: 4px; top: -1px; width: 25px; height: 146px; background: #fdff30; mix-blend-mode: multiply; }
.b1 { position: absolute; left: -19px; top: -2px; }

.navigator { display: flex; flex: none; height: 28px; background: #e0edff; }
.pos { width: 34px; text-align: center; line-height: 28px; background: #fff; color: #000; }
.nav-buttons { display: flex; background: linear-gradient(#e3efff, #cfe2ff 32%, #bcd8ff 34%, #c8dfff); }
.nav-buttons button { width: 26px; display: flex; align-items: center; justify-content: center; padding-right: 2px; }
.hscroll { flex: none; width: 181px; margin-left: auto; display: flex; justify-content: space-between; align-items: center; padding: 0 5px; background: linear-gradient(#f9f9f9, #ececec 60%); }
.hscroll i { border: 5px solid transparent; }
.hscroll .left { border-left: 0; border-right-color: #93a3cc; }
.hscroll .right { border-right: 0; border-left-color: #93a3cc; }

/* right column */
.detail { flex: 1; min-width: 0; display: flex; flex-direction: column; padding-bottom: 3px; }
.inner { padding-left: 3px; }
.inner button { width: 127px; }
.inner .on { width: 127px; background: linear-gradient(90deg, #f3f7ff 6px, #f7fb30 6px); }
.inner .first { width: 130px; margin-right: -4px; }
.b3 { position: absolute; left: 115px; top: 1px; }
.pane { flex: 1; min-height: 0; display: flex; flex-direction: column; padding: 8px; }
.tree { flex: 1; min-height: 0; background: #e3eeff; }
.grid-row { flex: 1; min-height: 0; display: flex; }
.tree th { line-height: 19px; }
.tree td { height: 19px; line-height: 19px; }
.tree tbody tr { background: #f5faff; }
.tree tbody tr:nth-child(even) { background: #f4fbf2; }
.tree td:nth-child(1) { position: relative; border-right: 1px solid #6f9bd3; background: linear-gradient(#fff, #cfe2fd); }
.tree td:nth-child(2) { padding-left: 0; padding-right: 2px; }
.tree td:nth-child(3), .tree td:nth-child(4) { background: #bfccdb; }
.tree td:nth-child(5) { text-align: right; padding-right: 3px; }
.tree td:nth-child(5).txt { text-align: left; }
.tree td:nth-child(6) { text-align: center; }
.tree td:nth-child(8) { padding-left: 0; }
.tree td svg { display: block; width: 12px; height: 12px; margin: 0 0 0 4px; }
.tree td input { margin-left: 3px; }
.tree .current td:nth-child(2) { background: linear-gradient(90deg, transparent 68px, #7c97b8 68px); color: #fff; }
.tree .current td:nth-child(n+3):not(:nth-child(5)) { background: #7c97b8; color: #fff; }
.tree .current td:nth-child(1)::before { content: ""; position: absolute; left: 1px; top: 6px; width: 6px; height: 6px; border: solid #6f9fe0; border-width: 2px 2px 0 0; transform: rotate(45deg); }
.node { display: flex; height: 19px; }
.node span { flex: 1; text-align: right; }
.node i { position: relative; width: 17px; flex: none; }
.node .v::after { content: ""; position: absolute; left: 8px; top: 0; bottom: 0; border-left: 1px dotted #8aa4c8; }
.node .h::before { content: ""; position: absolute; left: 9px; top: 9px; width: 8px; border-top: 1px dotted #8aa4c8; }
.node .box { background: linear-gradient(90deg, #3f5680, #3f5680) 6px 9px / 5px 1px no-repeat; }
.node .box.plus { background: linear-gradient(#3f5680, #3f5680) 6px 9px / 5px 1px no-repeat, linear-gradient(#3f5680, #3f5680) 8px 7px / 1px 5px no-repeat; }
.node .box::before { content: ""; position: absolute; left: 3px; top: 4px; width: 11px; height: 11px; border: 1px solid #5a76a6; border-radius: 2px; }
.node .box.v::after { top: 15px; }
.mark-rows { position: absolute; left: 30px; right: 0; top: 78px; height: 193px; background: #fdff30; mix-blend-mode: multiply; }
.vscroll { width: 17px; flex: none; display: flex; flex-direction: column; align-items: center; background: #ededee; padding: 6px 1px 4px 1px; }
.vscroll .up { border: 4px solid transparent; border-top: 0; border-bottom: 5px solid #4c6090; }
.vscroll .down { border: 4px solid transparent; border-bottom: 0; border-top: 5px solid #4c6090; }
.thumb { flex: 60; width: 15px; margin-top: 6px; border: 1px solid #54688f; border-radius: 2px; background: linear-gradient(90deg, #f4f7fb, #c6d0de 70%, #9fb3cf); display: flex; align-items: center; justify-content: center; }
.thumb i { width: 7px; height: 8px; background: repeating-linear-gradient(#54688f 0, #54688f 1px, #fff 1px, #fff 2px); }
.track { flex: 41; }
.tree .pos { width: 52px; background: #e9f2ff; color: #00156e; }
.tree .hscroll { width: 211px; margin-right: 17px; }
.b4 { position: absolute; left: 8px; top: 75px; }
.hsplitter { height: 16px; flex: none; display: flex; align-items: center; justify-content: center; background: linear-gradient(#e3eeff 6px, #fff 6px, #fff 8px, #c4dcff 8px, #c4dcff 9px, #e3eeff 9px); }
.fold { height: 20px; flex: none; display: flex; align-items: center; gap: 13px; border: 1px solid #6593cf; background: linear-gradient(#fff, #e0edff 2px, #b4d3ff); padding-left: 2px; }
.fold button { width: 15px; height: 15px; border: 1px solid #7e99c4; border-radius: 2px; background: #e6f0ff; display: flex; align-items: center; justify-content: center; }
```
